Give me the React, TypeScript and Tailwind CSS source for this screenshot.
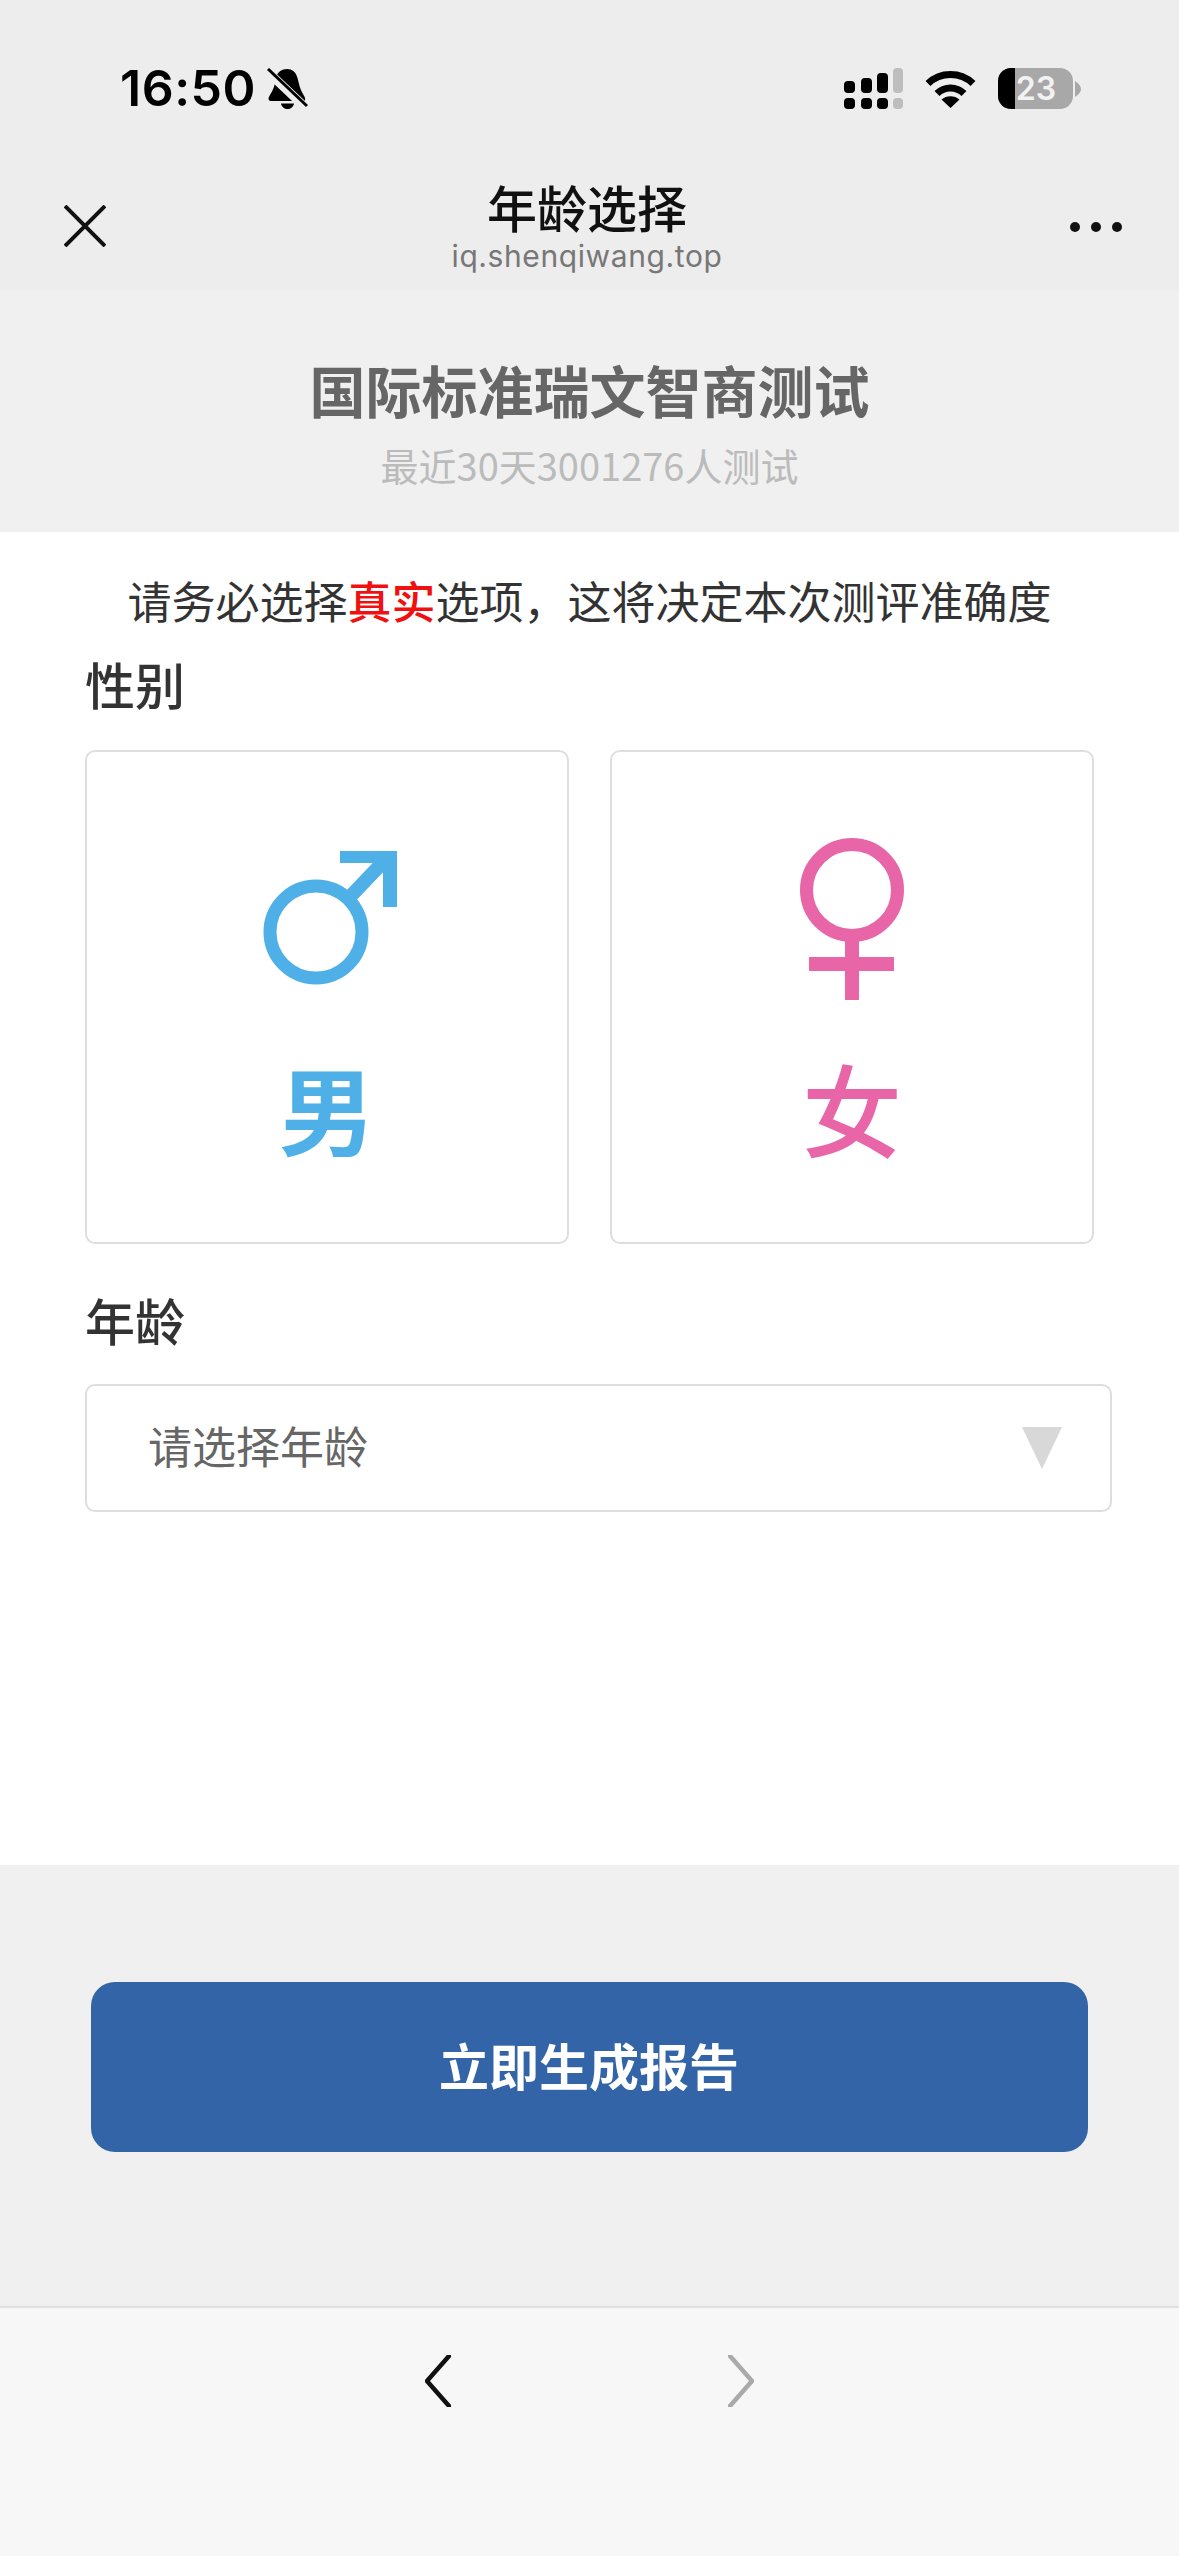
import React from 'react';

const cjk = "font-['Noto_Sans_CJK_SC','Noto_Sans',sans-serif]";

const SignalIcon = () => (
  <svg width="60" height="41" viewBox="0 0 60 41">
    <rect x="0" y="13" width="11" height="12" rx="4" fill="#000" />
    <rect x="17" y="10" width="11" height="15" rx="4" fill="#000" />
    <rect x="33" y="5" width="11" height="20" rx="4" fill="#000" />
    <rect x="49" y="0" width="10" height="25" rx="4" fill="#bdbdbd" />
    <rect x="0" y="30" width="11" height="11" rx="4" fill="#000" />
    <rect x="17" y="30" width="11" height="11" rx="4" fill="#000" />
    <rect x="33" y="30" width="11" height="11" rx="4" fill="#000" />
    <rect x="49" y="30" width="10" height="11" rx="4" fill="#bdbdbd" />
  </svg>
);

const WifiIcon = () => (
  <svg width="51" height="38" viewBox="0 0 51 38" fill="none">
    <path d="M3 13.5C15.5 1.5 35.5 1.5 48 13.5" stroke="#000" strokeWidth="7" />
    <path d="M12 23.5C19.5 16 31.5 16 39 23.5" stroke="#000" strokeWidth="7" />
    <path d="M16.5 29.5C21.5 25 29.5 25 34.5 29.5L25.5 38Z" fill="#000" />
  </svg>
);

const BatteryIcon = () => (
  <div className="flex items-center">
    <div className="flex h-[41px] w-[75px] items-center overflow-hidden rounded-[13px] bg-[#a8a8a8]">
      <div className="h-full w-[17px] shrink-0 bg-black" />
      <span className="w-[46px] pr-[4px] text-center font-['Inter',sans-serif] text-[32px] leading-[41px] font-semibold text-[#f2f2f2]">
        23
      </span>
    </div>
    <svg width="6" height="16" viewBox="0 0 6 16" className="ml-[2px]">
      <path d="M0 0C4 3 6 5 6 8C6 11 4 13 0 16Z" fill="#a8a8a8" />
    </svg>
  </div>
);

const BellOffIcon = () => (
  <svg width="41" height="41" viewBox="0 0 41 41">
    <path
      d="M20 1C25 1 29 4 30.5 10C32 16 33 21 36 26C38 29.5 39 31.5 37.5 33H3C1 32 1 30 3 27C6.5 22 8 16 9 10C10 4 15 1 20 1Z"
      fill="#000"
    />
    <path d="M14 35.5H27C26.5 39 23.5 41 20.5 41C17.5 41 14.5 39 14 35.5Z" fill="#000" />
    <path d="M1 4L39 40" stroke="#ededed" strokeWidth="9" />
    <path d="M1 1L40 38" stroke="#000" strokeWidth="3" />
  </svg>
);

const MaleIcon = () => (
  <svg width="134" height="134" viewBox="0 0 134 134" fill="none" className="mb-[33px] ml-[6px]">
    <circle cx="53" cy="81" r="46" stroke="#4fb0e8" strokeWidth="13" />
    <path d="M84 49L124 7" stroke="#4fb0e8" strokeWidth="14" />
    <path d="M77 0H134V56H120V12H77Z" fill="#4fb0e8" />
  </svg>
);

const FemaleIcon = () => (
  <svg width="104" height="162" viewBox="0 0 104 162" fill="none" className="mb-[18px]">
    <circle cx="52" cy="52" r="45.5" stroke="#e866a8" strokeWidth="13" />
    <path d="M52 98V162" stroke="#e866a8" strokeWidth="14" />
    <path d="M9 126H94" stroke="#e866a8" strokeWidth="14" />
  </svg>
);

const GenderCard = ({ icon, label, className }: { icon: React.ReactNode; label: string; className: string }) => (
  <div className="flex h-[494px] w-[484px] flex-col items-center rounded-[10px] border-2 border-[#dedede] bg-white">
    <div className="flex h-[266px] items-end justify-center">{icon}</div>
    <div className={`mt-[29px] leading-[120px] ${className}`}>{label}</div>
  </div>
);

export default function App() {
  return (
    <div className={`flex h-[2556px] w-[1179px] flex-col overflow-hidden bg-white ${cjk}`}>
      <div className="h-[290px] shrink-0 bg-[#ededed]">
        {/* status bar */}
        <div className="flex h-[176px] items-start justify-between pt-[68px] pr-[98px] pl-[120px]">
          <div className="flex items-center gap-[11px]">
            <span className="font-['Inter',sans-serif] text-[50px] leading-[41px] font-semibold tracking-[0.5px] text-black">16:50</span>
            <BellOffIcon />
          </div>
          <div className="flex items-center">
            <SignalIcon />
            <div className="ml-[21px]">
              <WifiIcon />
            </div>
            <div className="ml-[22px]">
              <BatteryIcon />
            </div>
          </div>
        </div>
        {/* nav */}
        <div className="flex items-start justify-between pr-[57px] pl-[64px]">
          <svg width="42" height="42" viewBox="0 0 42 42" className="mt-[29px]" fill="none">
            <path d="M1 1L41 41M41 1L1 41" stroke="#111" strokeWidth="4" />
          </svg>
          <div className="flex flex-col items-center pr-[2px]">
            <div className="mt-[2px] text-[50px] leading-[56px] font-medium text-[#111]">年龄选择</div>
            <div className="mt-[4px] font-['Inter',sans-serif] text-[30px] leading-[36px] tracking-[0.6px] text-[#777]">iq.shenqiwang.top</div>
          </div>
          <div className="mt-[46px] flex gap-[11px]">
            <div className="size-[10px] rounded-full bg-[#111]" />
            <div className="size-[10px] rounded-full bg-[#111]" />
            <div className="size-[10px] rounded-full bg-[#111]" />
          </div>
        </div>
      </div>

      <div className="flex h-[242px] shrink-0 flex-col items-center bg-[#f0f0f0] pt-[65px]">
        <h1 className="text-[56px] leading-[68px] font-bold text-[#666]">国际标准瑞文智商测试</h1>
        <p className="mt-[20px] text-[38px] leading-[44px] text-[#bbb]">最近30天3001276人测试</p>
      </div>

      <div className="h-[1333px] shrink-0 bg-white px-[85px]">
        <p className="mt-[37px] text-center text-[44px] leading-[62px] whitespace-nowrap text-[#333]">
          请务必选择<span className="font-medium text-[#f01010]">真实</span>选项，这将决定本次测评准确度
        </p>
        <h2 className="mt-[17px] text-[50px] leading-[70px] font-medium text-[#333]">性别</h2>
        <div className="mt-[32px] flex gap-[41px]">
          <GenderCard icon={<MaleIcon />} label="男" className="text-[96px] font-bold text-[#4fb0e8]" />
          <GenderCard icon={<FemaleIcon />} label="女" className="text-[100px] font-medium text-[#e866a8]" />
        </div>
        <h2 className="mt-[40px] text-[50px] leading-[70px] font-medium text-[#333]">年龄</h2>
        <div className="mt-[30px] flex h-[128px] w-[1027px] items-center justify-between rounded-[10px] border-2 border-[#dedede] pr-[48px] pl-[61px]">
          <span className="pb-[6px] text-[44px] leading-[60px] text-[#666]">请选择年龄</span>
          <svg width="40" height="42" viewBox="0 0 40 42">
            <path d="M0 0H40L20 42Z" fill="#d8d8d8" />
          </svg>
        </div>
      </div>

      <div className="flex h-[441px] shrink-0 items-start justify-center bg-[#f0f0f0] pt-[117px]">
        <button className="ml-[-1px] h-[170px] w-[997px] rounded-[24px] bg-[#3364a7] pb-[6px] text-[50px] font-bold text-white">立即生成报告</button>
      </div>

      <div className="flex flex-1 items-start justify-center gap-[277px] border-t-2 border-[#e0e0e0] bg-[#f7f7f7] pt-[47px]">
        <svg width="26" height="52" viewBox="0 0 26 52" fill="none">
          <path d="M24 1L2 26L24 51" stroke="#111" strokeWidth="4.5" strokeLinecap="round" strokeLinejoin="round" />
        </svg>
        <svg width="26" height="52" viewBox="0 0 26 52" fill="none">
          <path d="M2 1L24 26L2 51" stroke="#aaa" strokeWidth="4.5" strokeLinecap="round" strokeLinejoin="round" />
        </svg>
      </div>
    </div>
  );
}
